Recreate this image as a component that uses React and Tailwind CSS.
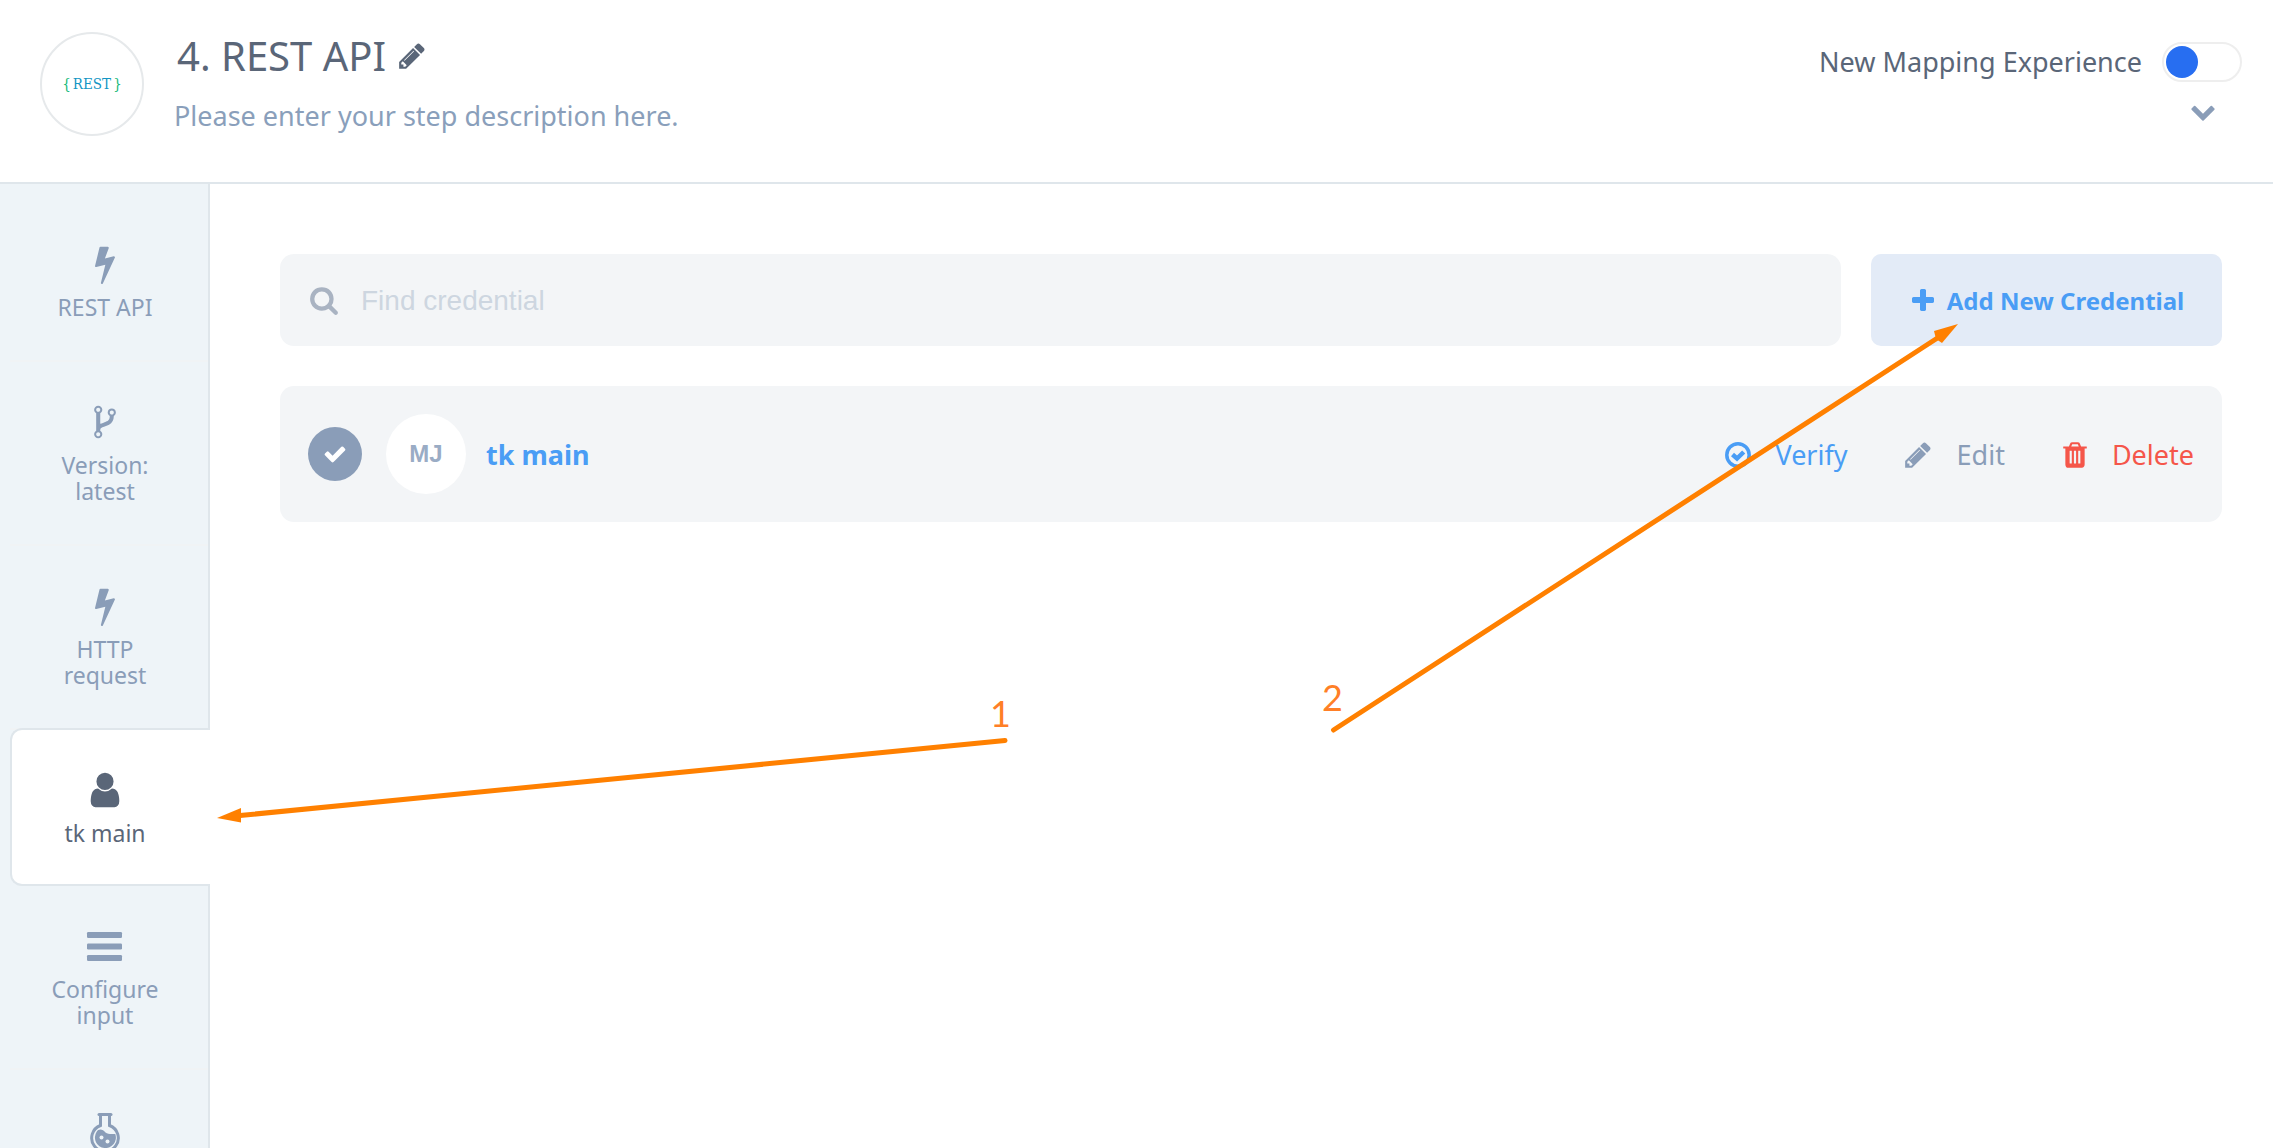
const paths = {
  bolt: 'M1333 566q18 20 7 44l-540 1157q-13 25-42 25-4 0-14-2-17-5-25.5-19t-4.5-30l197-808-406 101q-4 1-12 1-18 0-31-11-18-15-13-39l201-825q4-14 16-23t28-9h328q19 0 32 12.5t13 29.5q0 8-5 18l-171 463 396-98q8-2 12-2 19 0 34 15z',
  fork: 'M672 1472q0-40-28-68t-68-28-68 28-28 68 28 68 68 28 68-28 28-68zm0-1152q0-40-28-68t-68-28-68 28-28 68 28 68 68 28 68-28 28-68zm640 128q0-40-28-68t-68-28-68 28-28 68 28 68 68 28 68-28 28-68zm96 0q0 52-26 96.5t-70 69.5q-2 287-226 414-67 38-203 81-128 40-169.5 71t-41.5 100v26q44 25 70 69.5t26 96.5q0 80-56 136t-136 56-136-56-56-136q0-52 26-96.5t70-69.5v-820q-44-25-70-69.5t-26-96.5q0-80 56-136t136-56 136 56 56 136q0 52-26 96.5t-70 69.5v497q54-26 154-57 55-17 87.5-29.5t70.5-31 59-39.5 40.5-51 28-69.5 8.5-91.5q-44-25-70-69.5t-26-96.5q0-80 56-136t136-56 136 56 56 136z',
  user: 'M1536 1399q0 109-62.5 187t-150.5 78h-854q-88 0-150.5-78t-62.5-187q0-85 8.5-160.5t31.5-152 58.5-131 94-89 134.5-34.5q131 128 313 128t313-128q76 0 134.5 34.5t94 89 58.5 131 31.5 152 8.5 160.5zm-256-887q0 159-112.5 271.5t-271.5 112.5-271.5-112.5-112.5-271.5 112.5-271.5 271.5-112.5 271.5 112.5 112.5 271.5z',
  pencil: 'M491 1536l91-91-235-235-91 91v107h128v128h107zm523-928q0-22-22-22-10 0-17 7l-542 542q-7 7-7 17 0 22 22 22 10 0 17-7l542-542q7-7 7-17zm-54-192l416 416-832 832h-416v-416zm683 96q0 53-37 90l-166 166-416-416 166-165q36-38 90-38 53 0 91 38l235 234q37 39 37 91z',
  search: 'M1216 832q0-185-131.5-316.5t-316.5-131.5-316.5 131.5-131.5 316.5 131.5 316.5 316.5 131.5 316.5-131.5 131.5-316.5zm512 832q0 52-38 90t-90 38q-54 0-90-38l-343-342q-179 124-399 124-143 0-273.5-55.5t-225-150-150-225-55.5-273.5 55.5-273.5 150-225 225-150 273.5-55.5 273.5 55.5 225 150 150 225 55.5 273.5q0 220-124 399l343 343q37 37 37 90z',
  check: 'M1671 566q0 40-28 68l-724 724-136 136q-28 28-68 28t-68-28l-136-136-362-362q-28-28-28-68t28-68l136-136q28-28 68-28t68 28l294 295 656-657q28-28 68-28t68 28l136 136q28 28 28 68z',
  plus: 'M1600 736v192q0 40-28 68t-68 28h-416v416q0 40-28 68t-68 28h-192q-40 0-68-28t-28-68v-416h-416q-40 0-68-28t-28-68v-192q0-40 28-68t68-28h416v-416q0-40 28-68t68-28h192q40 0 68 28t28 68v416h416q40 0 68 28t28 68z',
  chevron: 'M1683 808l-742 741q-19 19-45 19t-45-19l-742-741q-19-19-19-45.5t19-45.5l166-165q19-19 45-19t45 19l531 531 531-531q19-19 45-19t45 19l166 165q19 19 19 45.5t-19 45.5z',
  trash: 'M704 1376v-704q0-14-9-23t-23-9h-64q-14 0-23 9t-9 23v704q0 14 9 23t23 9h64q14 0 23-9t9-23zm256 0v-704q0-14-9-23t-23-9h-64q-14 0-23 9t-9 23v704q0 14 9 23t23 9h64q14 0 23-9t9-23zm256 0v-704q0-14-9-23t-23-9h-64q-14 0-23 9t-9 23v704q0 14 9 23t23 9h64q14 0 23-9t9-23zm-544-992h448l-48-117q-7-9-17-11h-317q-10 2-17 11zm928 32v64q0 14-9 23t-23 9h-96v948q0 83-47 143.5t-113 60.5h-832q-66 0-113-58.5t-47-141.5v-952h-96q-14 0-23-9t-9-23v-64q0-14 9-23t23-9h309l70-167q15-37 54-63t79-26h320q40 0 79 26t54 63l70 167h309q14 0 23 9t9 23z',
};

function Icon({ name, className }) {
  return (
    <svg viewBox="0 0 1792 1792" fill="currentColor" aria-hidden="true" className={`shrink-0 ${className}`}>
      <path d={paths[name]} />
    </svg>
  );
}

function BarsIcon() {
  return (
    <svg viewBox="0 0 38 38" fill="currentColor" aria-hidden="true" className="size-[38px] shrink-0">
      <rect x="1" y="5" width="35" height="6" rx="1.2" />
      <rect x="1" y="16.5" width="35" height="6" rx="1.2" />
      <rect x="1" y="28" width="35" height="6" rx="1.2" />
    </svg>
  );
}

function FlaskIcon() {
  return (
    <svg viewBox="0 0 38 40" fill="none" stroke="currentColor" strokeWidth="3" aria-hidden="true" className="h-10 w-[38px] shrink-0">
      <path d="M13 2.5H25" strokeLinecap="round" />
      <path d="M14.5 3V13.5A13.3 13.3 0 1 0 23.5 13.5V3" />
      <path
        d="M10.5 20C13 16 17 17.5 19.5 20.500C22 22.500 25.500 22 29.300 22A10.500 10.500 0 1 1 10.500 20Z"
        fill="currentColor"
        stroke="none"
      />
      <circle cx="15.5" cy="25.500" r="2" fill="#eef4f8" stroke="none" />
      <circle cx="21.5" cy="29.500" r="2" fill="#eef4f8" stroke="none" />
    </svg>
  );
}

function VerifyIcon() {
  return (
    <svg viewBox="0 0 26 26" fill="none" aria-hidden="true" className="size-[26px] shrink-0">
      <circle cx="13" cy="13" r="11.2" stroke="currentColor" strokeWidth="3.5" />
      <path d="M7.500 12.500L12 16.500L18.700 10" stroke="currentColor" strokeWidth="4.500" />
    </svg>
  );
}

const steps = [
  { label: 'REST API', icon: <Icon name="bolt" className="size-10" /> },
  { label: 'Version: latest', icon: <Icon name="fork" className="size-[38px]" /> },
  { label: 'HTTP request', icon: <Icon name="bolt" className="size-10" /> },
  { label: 'tk main', icon: <Icon name="user" className="size-10" />, active: true },
  { label: 'Configure input', icon: <BarsIcon /> },
];

function Step({ label, icon, active }) {
  return (
    <button
      type="button"
      className={
        active
          ? 'relative -mt-0.5 -mr-0.5 flex flex-col items-center rounded-l-xl border-2 border-r-0 border-[#dfe6eb] bg-white pt-[41px] pr-3 pb-[38px] text-[#5a6678]'
          : 'flex flex-col items-center border-b-2 border-[#f0f3f5] pt-[41px] pr-2 pb-10 text-[#8a9db8]'
      }
    >
      <span className="flex h-[38px] items-center">{icon}</span>
      <span className="mt-[11px] w-28 text-[23px] leading-[26px]">{label}</span>
    </button>
  );
}

function Header() {
  return (
    <header className="flex h-[184px] shrink-0 items-start justify-between border-b-2 border-[#dfe6eb] pr-[31px] pl-10">
      <div className="flex">
        <div className="mt-8 flex size-[104px] shrink-0 items-center justify-center gap-0.5 rounded-full border-2 border-[#e6e9eb] font-['DejaVu_Serif_Condensed','DejaVu_Serif',serif] text-[15px] text-[#1496c4]">
          <span className="text-[#12b877]">{'{'}</span>
          <span>REST</span>
          <span className="text-[#12b877]">{'}'}</span>
        </div>
        <div className="mt-7 ml-[30px]">
          <div className="flex items-center gap-[11px]">
            <h1 className="pl-[3px] text-[40px] leading-[56px] text-[#5a6678]">4. REST API</h1>
            <button type="button" aria-label="Edit step name" className="text-[#5a6678]">
              <Icon name="pencil" className="size-[30px]" />
            </button>
          </div>
          <p className="mt-3 text-[27px] leading-10 text-[#8a9fbb]">Please enter your step description here.</p>
        </div>
      </div>
      <div className="mt-[42px] flex flex-col items-end">
        <label className="flex items-center gap-5 text-[27px] leading-10 text-[#5a6678]">
          New Mapping Experience
          <input
            type="checkbox"
            role="switch"
            className="h-10 w-20 appearance-none rounded-full border-2 border-[#eeeeee] bg-white p-0.5 before:block before:size-8 before:rounded-full before:bg-[#276ef1] checked:before:ml-auto"
          />
        </label>
        <button type="button" aria-label="Expand" className="mt-4 mr-[26px] text-[#8a9db8]">
          <Icon name="chevron" className="size-[26px]" />
        </button>
      </div>
    </header>
  );
}

function Annotations() {
  return (
    <svg aria-hidden="true" className="pointer-events-none absolute inset-0 size-full">
      <g stroke="#ff8000" strokeWidth="5" strokeLinecap="round">
        <path d="M1005 740.5L240 815.5" />
        <path d="M1333.5 730L1939 337" />
      </g>
      <g fill="#ff8000">
        <path d="M217 818L241 808V822.5Z" />
        <path d="M1958 324L1934 331L1936 339L1942 343Z" />
      </g>
      <g fill="#ff7f27" className="font-['Lato',sans-serif] text-[36px]">
        <text x="990" y="727">1</text>
        <text x="1322" y="711">2</text>
      </g>
    </svg>
  );
}

export default function App() {
  return (
    <div className="relative flex h-screen flex-col overflow-hidden bg-white font-['Noto_Sans',sans-serif]">
      <Header />
      <div className="flex min-h-0 flex-1">
        <nav className="flex w-[210px] shrink-0 flex-col border-r-2 border-[#dfe6eb] bg-[#eef4f8] pt-5 pl-2.5">
          {steps.map((s) => (
            <Step key={s.label} {...s} />
          ))}
          <button type="button" aria-label="Test step" className="flex justify-center pt-[42px] pr-2 text-[#8a9db8]">
            <FlaskIcon />
          </button>
        </nav>
        <main className="min-w-0 flex-1 pt-[70px] pr-[51px] pl-[70px]">
          <div className="flex gap-[30px]">
            <label className="flex h-[92px] min-w-0 flex-1 items-center gap-[22px] rounded-[14px] bg-[#f3f5f7] pl-[29px]">
              <Icon name="search" className="size-[30px] text-[#a9b3c2]" />
              <input
                type="search"
                aria-label="Find credential"
                placeholder="Find credential"
                className="h-full min-w-0 flex-1 bg-transparent pt-0.5 font-['Liberation_Sans',sans-serif] text-[28px] text-[#5a6678] outline-none placeholder:text-[#cdd6e0]"
              />
            </label>
            <button
              type="button"
              className="flex w-[351px] shrink-0 items-center justify-center gap-2.5 rounded-[10px] bg-[#e3ebf7] pt-0.5 text-2xl font-bold text-[#4a9df5]"
            >
              <Icon name="plus" className="size-7" />
              Add New Credential
            </button>
          </div>
          <div className="mt-10 flex h-[136px] items-center rounded-[14px] bg-[#f3f5f7] pr-7 pl-7">
            <span className="flex size-[54px] shrink-0 items-center justify-center rounded-full bg-[#8a9db8] text-white">
              <Icon name="check" className="size-6" />
            </span>
            <span className="ml-6 flex size-20 shrink-0 items-center justify-center rounded-full bg-white font-['Liberation_Sans',sans-serif] text-2xl font-bold text-[#9aacc5]">
              MJ
            </span>
            <span className="ml-5 pt-0.5 text-[27px] font-bold text-[#4a9df5]">tk main</span>
            <div className="ml-auto flex items-center gap-[55px] pt-0.5 text-[27px]">
              <button type="button" className="flex items-center gap-6 text-[#4a9df5]">
                <VerifyIcon />
                Verify
              </button>
              <button type="button" className="flex items-center gap-6 text-[#8a9db8]">
                <Icon name="pencil" className="size-[30px]" />
                Edit
              </button>
              <button type="button" className="flex items-center gap-[22px] text-[#f5564a]">
                <Icon name="trash" className="size-[30px]" />
                Delete
              </button>
            </div>
          </div>
        </main>
      </div>
      <Annotations />
    </div>
  );
}
